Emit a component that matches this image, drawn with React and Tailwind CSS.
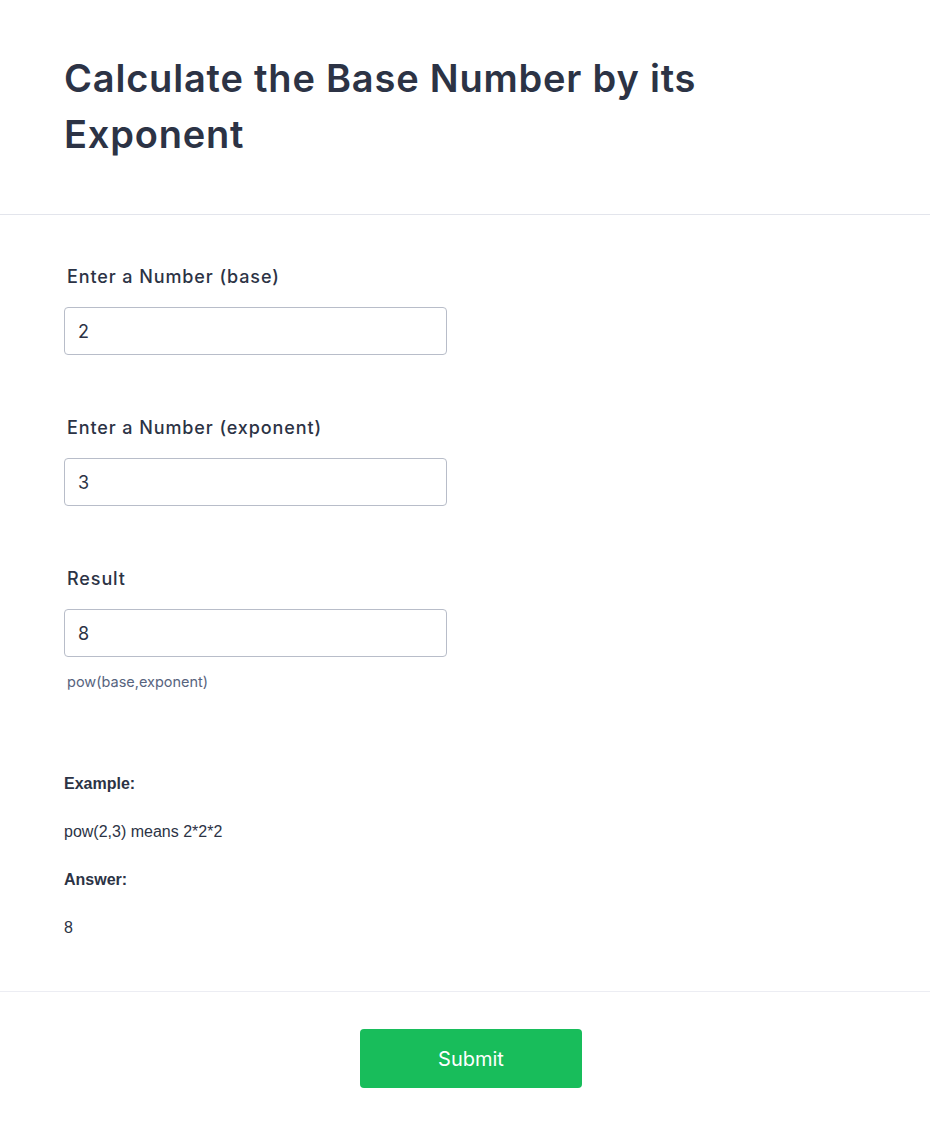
export default function App() {
  const fields = [
    { label: "Enter a Number (base)", value: "2" },
    { label: "Enter a Number (exponent)", value: "3" },
    { label: "Result", value: "8", hint: "pow(base,exponent)" },
  ];

  return (
    <div className="min-h-[1138px] bg-white text-[#2c3345]" style={{ fontFamily: "Inter, 'Noto Sans', sans-serif" }}>
      {/* Header */}
      <div className="px-16 pt-[50px] pb-[52px] border-b border-[#e3e5ec]">
        <h1 className="text-[38px] leading-[56px] font-semibold tracking-[0.8px] max-w-[720px]">
          Calculate the Base Number by its Exponent
        </h1>
      </div>

      {/* Fields */}
      <div className="px-16 pt-[50px]">
        {fields.map((f, i) => (
          <div key={i} className={i === 0 ? "" : "mt-[61px]"}>
            <label className="block pl-[3px] text-[18px] leading-6 font-medium tracking-[0.9px]">
              {f.label}
            </label>
            <div className="mt-[18px] w-[383px] h-12 rounded border border-[#b8bdc9] flex items-center px-[13px] text-[18px]">
              {f.value}
            </div>
            {f.hint && (
              <div className="mt-[15px] pl-[3px] text-[14.5px] leading-5 text-[#57647e]">
                {f.hint}
              </div>
            )}
          </div>
        ))}
      </div>

      {/* Example text */}
      <div
        className="px-16 pt-[82px] pb-[53px] text-[16px] leading-5 border-b border-[#ecedf3]"
        style={{ fontFamily: "'Liberation Sans', Arial, sans-serif" }}
      >
        <p className="font-bold">Example:</p>
        <p className="mt-7">pow(2,3) means 2*2*2</p>
        <p className="mt-7 font-bold">Answer:</p>
        <p className="mt-7">8</p>
      </div>

      {/* Submit */}
      <div className="flex justify-center pl-3 pt-[37px] pb-12">
        <button className="w-[222px] h-[59px] rounded bg-[#18bd5b] text-white text-[20px]">
          Submit
        </button>
      </div>
    </div>
  );
}
